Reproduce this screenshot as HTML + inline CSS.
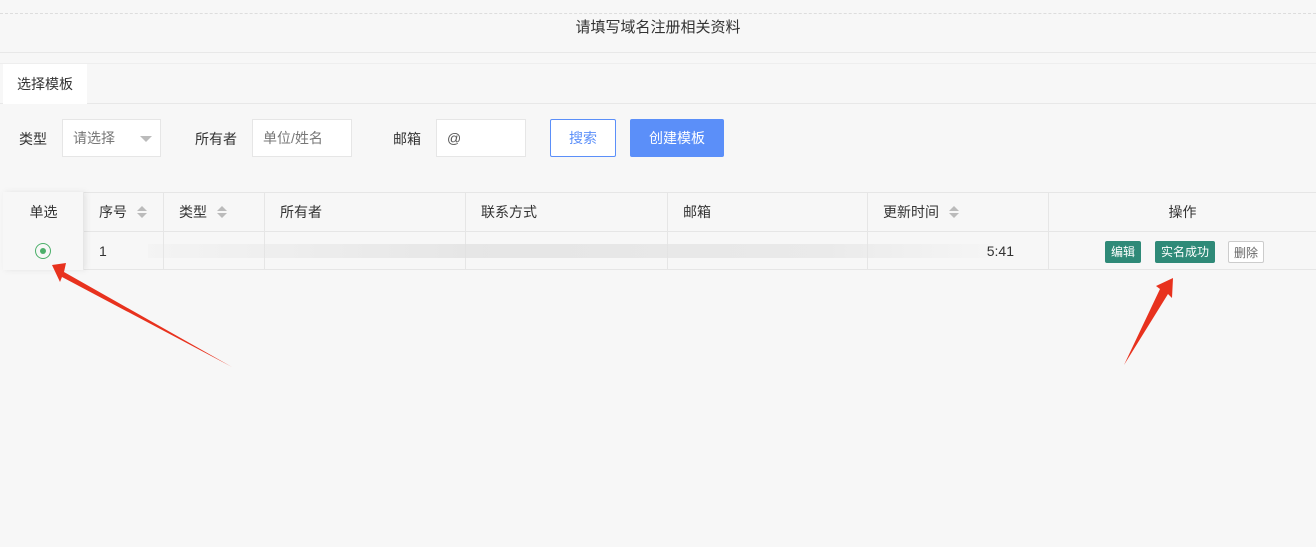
<!DOCTYPE html>
<html><head><meta charset="utf-8"><style>
*{margin:0;padding:0;box-sizing:border-box}
body{width:1316px;height:547px;background:#f7f7f7;font-family:"Liberation Sans","Noto Sans CJK SC",sans-serif;color:#333;position:relative;overflow:hidden;font-size:14px}
.a{position:absolute}
.in{position:absolute;background:#fff;border:1px solid #e6e6e6;height:38px;top:119px;line-height:36px;padding-left:10px;color:#777;font-size:14px}
.th,.td{position:absolute;border-right:1px solid #e6e6e6;line-height:40px;padding-left:15px;font-size:14px}
.th{top:192px;height:39px}
.td{top:231px;height:39px}
.s{display:inline-block;width:0;height:0;margin-left:15px;vertical-align:middle;position:relative;top:-1px}
.s:before{content:"";position:absolute;left:-5px;top:-6px;border:5px solid transparent;border-bottom:5px solid #bbb;border-top:0}
.s:after{content:"";position:absolute;left:-5px;top:1px;border:5px solid transparent;border-top:5px solid #bbb;border-bottom:0}
.b{position:absolute;top:241px;height:22px;line-height:22px;font-size:12px;color:#fff;background:#2f8a78;border-radius:2px;text-align:center}
</style></head><body>
<div class="a" style="left:0;top:13px;width:1316px;border-top:1px dashed #ddd"></div>
<div class="a" style="left:0;top:16px;width:1316px;text-align:center;font-size:15px;color:#333">请填写域名注册相关资料</div>
<div class="a" style="left:0;top:52px;width:1316px;border-top:1px solid #e8e8e8"></div>
<div class="a" style="left:0;top:63px;width:1316px;border-top:1px solid #eee"></div>
<div class="a" style="left:0;top:103px;width:1316px;border-top:1px solid #e8e8e8"></div>
<div class="a" style="left:3px;top:64px;width:84px;height:40px;background:#fff;line-height:40px;text-align:center;font-size:14px">选择模板</div>
<div class="a" style="left:19px;top:129px">类型</div>
<div class="in" style="left:62px;width:99px">请选择<span class="a" style="left:77px;top:16px;border:6px solid transparent;border-top:6px solid #bbb"></span></div>
<div class="a" style="left:195px;top:129px">所有者</div>
<div class="in" style="left:252px;width:100px">单位/姓名</div>
<div class="a" style="left:393px;top:129px">邮箱</div>
<div class="in" style="left:436px;width:90px;color:#555">@</div>
<div class="a" style="left:550px;top:119px;width:66px;height:38px;border:1px solid #5b8ff9;background:#fff;color:#5b8ff9;text-align:center;line-height:36px;border-radius:2px">搜索</div>
<div class="a" style="left:630px;top:119px;width:94px;height:38px;background:#5b8ff9;color:#fff;text-align:center;line-height:38px;border-radius:2px">创建模板</div>
<div class="a" style="left:3px;top:192px;width:1313px;height:78px;border-top:1px solid #e6e6e6;border-bottom:1px solid #e6e6e6"></div>
<div class="a" style="left:3px;top:231px;width:1313px;border-top:1px solid #e6e6e6"></div>
<div class="a" style="left:3px;top:192px;width:81px;height:78px;background:#f7f7f7;box-shadow:2px 0 6px rgba(0,0,0,.08);border-right:1px solid #e6e6e6"></div>
<div class="th" style="left:3px;width:81px;padding:0;text-align:center;border:0">单选</div>
<div class="td" style="left:3px;width:81px;border:0"><span class="a" style="left:32px;top:12px;width:16px;height:16px;border:1.5px solid #4caf6a;border-radius:50%"></span><span class="a" style="left:37px;top:17px;width:6px;height:6px;background:#4caf6a;border-radius:50%"></span></div>
<div class="th" style="left:84px;width:80px">序号<span class="s"></span></div>
<div class="th" style="left:164px;width:101px">类型<span class="s"></span></div>
<div class="th" style="left:265px;width:201px">所有者</div>
<div class="th" style="left:466px;width:202px">联系方式</div>
<div class="th" style="left:668px;width:200px">邮箱</div>
<div class="th" style="left:868px;width:181px">更新时间<span class="s"></span></div>
<div class="th" style="left:1049px;width:267px;padding:0;text-align:center;border:0">操作</div>
<div class="td" style="left:84px;width:80px">1</div>
<div class="td" style="left:164px;width:101px"></div>
<div class="td" style="left:265px;width:201px"></div>
<div class="td" style="left:466px;width:202px"></div>
<div class="td" style="left:668px;width:200px"></div>
<div class="td" style="left:868px;width:181px;text-align:right;padding-right:34px">5:41</div>
<div class="a" style="left:148px;top:244px;width:840px;height:14px;background:linear-gradient(90deg,rgba(230,230,230,.2),rgba(225,225,225,.8) 40%,rgba(228,228,228,.7) 80%,rgba(230,230,230,.1))"></div>
<div class="b" style="left:1105px;width:36px">编辑</div>
<div class="b" style="left:1155px;width:60px">实名成功</div>
<div class="b" style="left:1228px;width:36px;background:#fff;color:#666;border:1px solid #ccc">删除</div>
<svg class="a" style="left:0;top:0" width="1316" height="547">
<polygon points="232,367 64,272 66,263 52,265 60,282 62,277" fill="#e8321e"/>
<polygon points="1124,365 1160,289 1156,286 1173,278 1172,298 1168,294" fill="#e8321e"/>
</svg>
</body></html>
